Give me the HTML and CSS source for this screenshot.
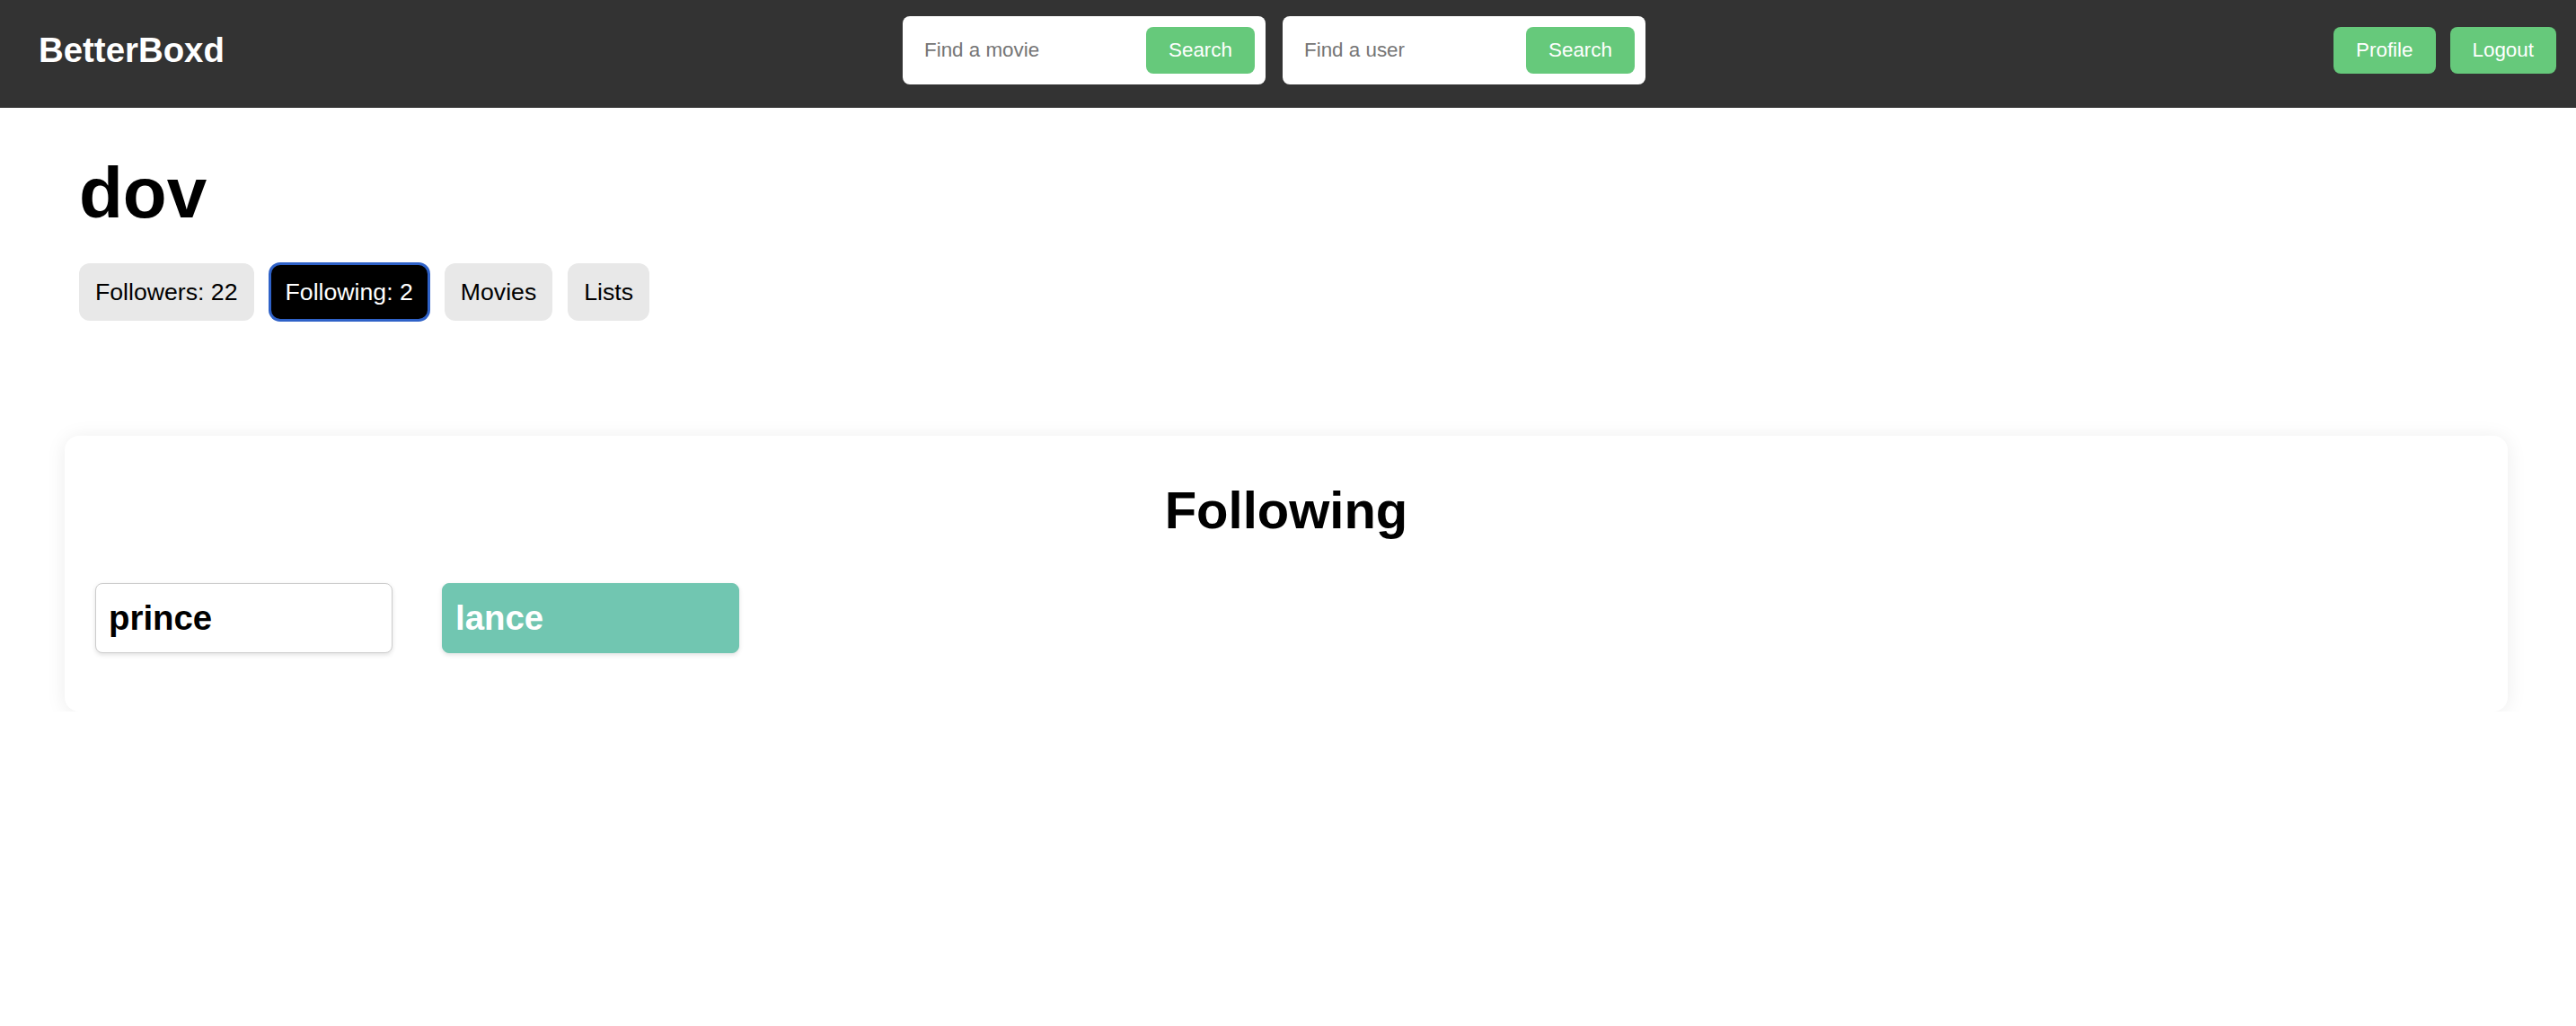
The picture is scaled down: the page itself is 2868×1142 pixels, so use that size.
FILE: index.html
```html
<!DOCTYPE html>
<html lang="en">
<head>
<meta charset="utf-8">
<title>BetterBoxd</title>
<link rel="stylesheet" href="styles.css">
</head>
<body>
<header class="navbar">
  <div class="logo">BetterBoxd</div>
  <div class="searches">
    <form class="search">
      <input class="search-input" type="text" placeholder="Find a movie">
      <button class="btn" type="button">Search</button>
    </form>
    <form class="search">
      <input class="search-input" type="text" placeholder="Find a user">
      <button class="btn" type="button">Search</button>
    </form>
  </div>
  <nav class="nav-actions">
    <button class="btn" type="button">Profile</button>
    <button class="btn" type="button">Logout</button>
  </nav>
</header>

<main>
  <section class="profile">
    <h1 class="username">dov</h1>
    <div class="tabs">
      <button class="tab" type="button">Followers: 22</button>
      <button class="tab tab-active" type="button">Following: 2</button>
      <button class="tab" type="button">Movies</button>
      <button class="tab" type="button">Lists</button>
    </div>
  </section>

  <section class="panel">
    <h2 class="panel-title">Following</h2>
    <div class="user-grid">
      <div class="user-card">prince</div>
      <div class="user-card user-card-accent">lance</div>
    </div>
  </section>
</main>
</body>
</html>
```

FILE: styles.css
```css
* {
  box-sizing: border-box;
}

body {
  margin: 0;
  background: #ffffff;
  color: #000000;
  font-family: "Liberation Sans", Arial, Helvetica, sans-serif;
}

button,
input {
  font-family: "Liberation Sans", Arial, Helvetica, sans-serif;
}

/* ---------- Navbar ---------- */
.navbar {
  display: flex;
  align-items: center;
  justify-content: space-between;
  height: 120px;
  padding: 0 22px 8px 43px;
  background: #333333;
}

.logo {
  color: #ffffff;
  font-size: 38.4px;
  font-weight: 700;
}

.searches {
  display: flex;
  gap: 19px;
  margin-right: 11px;
}

.search {
  display: flex;
  align-items: center;
  gap: 12px;
  width: 404px;
  margin: 0;
  padding: 12px;
  background: #ffffff;
  border-radius: 8px;
}

.search-input {
  flex: 1;
  min-width: 0;
  height: 52px;
  padding: 0 12px;
  border: none;
  outline: none;
  background: transparent;
  font-size: 22.4px;
  color: #333;
}

.search-input::placeholder {
  color: #757575;
}

.btn {
  height: 52px;
  padding: 0 25px;
  border: none;
  border-radius: 8px;
  background: #66c97b;
  color: #ffffff;
  font-size: 22.4px;
  cursor: pointer;
}

.nav-actions {
  display: flex;
  gap: 16px;
}

/* ---------- Profile ---------- */
.profile {
  padding: 49px 88px 0;
}

.username {
  margin: 0 0 32px;
  font-size: 80px;
  line-height: 92px;
  font-weight: 700;
}

.tabs {
  display: flex;
  gap: 17px;
}

.tab {
  padding: 15px 16px;
  border: 2px solid transparent;
  border-radius: 12px;
  background: #e8e8e8;
  color: #000000;
  font-size: 26.67px;
  line-height: 30px;
  cursor: pointer;
}

.tab-active {
  background: #000000;
  color: #ffffff;
  border-color: #2f62c8;
  box-shadow: 0 0 0 1px #2f62c8;
}

/* ---------- Panel ---------- */
.panel {
  margin: 128px 76px 0 72px;
  padding: 50px 34px 65px;
  background: #ffffff;
  border-radius: 16px;
  box-shadow: 0 2px 22px rgba(0, 0, 0, 0.08);
}

.panel-title {
  margin: 0 0 48px;
  text-align: center;
  font-size: 58px;
  line-height: 66px;
  font-weight: 700;
}

.user-grid {
  display: flex;
  gap: 55px;
}

.user-card {
  display: flex;
  align-items: center;
  width: 331px;
  height: 78px;
  padding: 0 14px;
  border: 1px solid #cccccc;
  border-radius: 8px;
  background: #ffffff;
  box-shadow: 0 2px 5px rgba(0, 0, 0, 0.12);
  font-size: 38.4px;
  font-weight: 700;
}

.user-card-accent {
  background: #71c6b1;
  border-color: #71c6b1;
  color: #ffffff;
}
```
